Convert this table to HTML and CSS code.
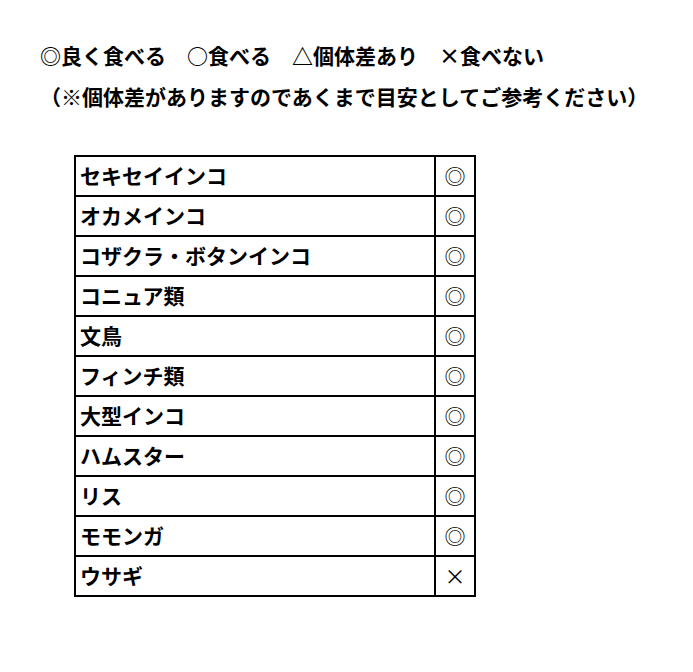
FILE: index.html
```html
<!DOCTYPE html>
<html lang="ja">
<head>
<meta charset="utf-8">
<link rel="stylesheet" href="styles.css">
</head>
<body>
<div class="page">
  <div class="legend">
    <p class="line1">◎良く食べる　○食べる　△個体差あり　×食べない</p>
    <p class="line2">（※個体差がありますのであくまで目安としてご参考ください）</p>
  </div>
  <table class="food">
    <tr><td class="name">セキセイインコ</td><td class="mark">◎</td></tr>
    <tr><td class="name">オカメインコ</td><td class="mark">◎</td></tr>
    <tr><td class="name">コザクラ・ボタンインコ</td><td class="mark">◎</td></tr>
    <tr><td class="name">コニュア類</td><td class="mark">◎</td></tr>
    <tr><td class="name">文鳥</td><td class="mark">◎</td></tr>
    <tr><td class="name">フィンチ類</td><td class="mark">◎</td></tr>
    <tr><td class="name">大型インコ</td><td class="mark">◎</td></tr>
    <tr><td class="name">ハムスター</td><td class="mark">◎</td></tr>
    <tr><td class="name">リス</td><td class="mark">◎</td></tr>
    <tr><td class="name">モモンガ</td><td class="mark">◎</td></tr>
    <tr><td class="name">ウサギ</td><td class="mark">×</td></tr>
  </table>
</div>
</body>
</html>
```
FILE: styles.css
```css
html, body {
  margin: 0;
  padding: 0;
  background: #fff;
}
body {
  font-family: "Noto Sans CJK JP", "Noto Sans", sans-serif;
  color: #000;
}
.page {
  padding: 35px 0 0 40px;
}
.legend p {
  margin: 0;
  font-size: 21px;
  font-weight: bold;
  line-height: 40px;
  white-space: nowrap;
}
.legend .line2 {
  margin-top: 1px;
}
.food {
  margin: 39px 0 0 34px;
  border-collapse: collapse;
  width: 402px;
}
.food td {
  border: 2px solid #000;
  height: 35px;
  padding: 0 0 3px;
  font-size: 21px;
}
.food .name {
  font-weight: bold;
  padding-left: 4px;
}
.food .mark {
  width: 38px;
  text-align: center;
  font-weight: normal;
}
```
